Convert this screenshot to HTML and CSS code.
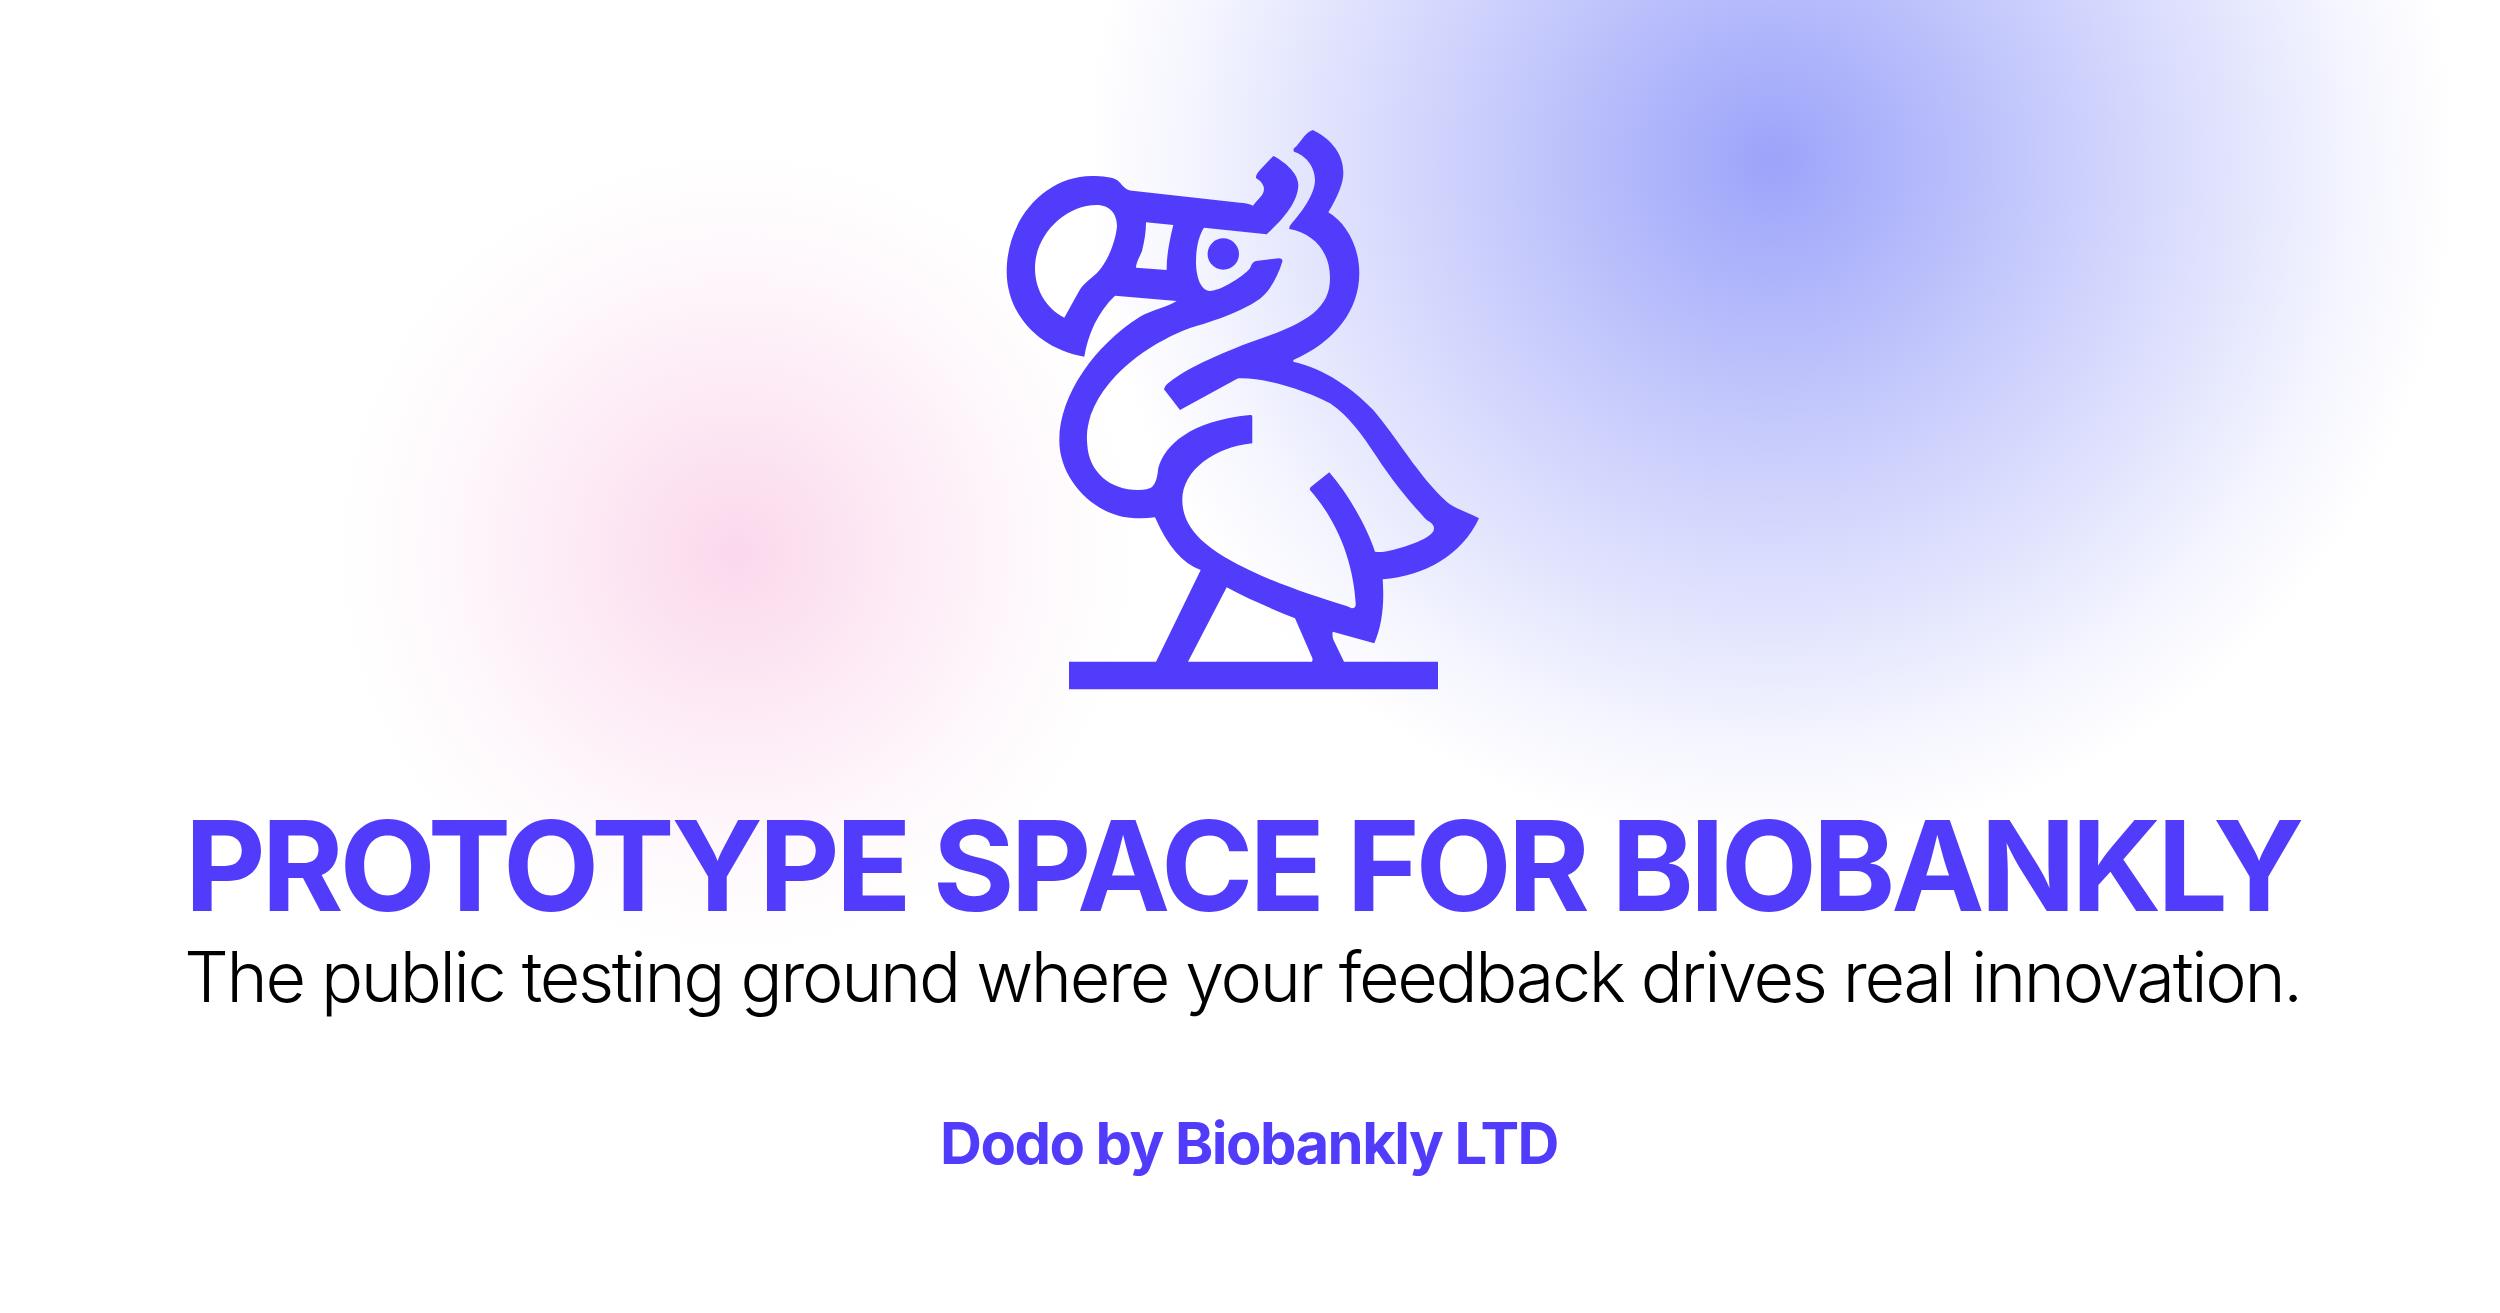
FILE: index.html
```html
<!DOCTYPE html>
<html lang="en">
<head>
<meta charset="utf-8">
<title>Dodo by Biobankly LTD</title>
<link rel="stylesheet" href="styles.css">
</head>
<body>
<main class="page">
  <svg class="logo" viewBox="1005 125 490 570" aria-hidden="true">
    <path class="logo-shape" fill-rule="evenodd" d="M1312.7 130 C1328 137 1343.3 152 1343.3 172 Q1344 186 1328.3 212.3 C1345 222 1359.3 245 1359.3 273.3 C1359.3 310 1335 342 1293.3 360 L1293.3 361.7 C1325 369 1352 388 1373.3 410 C1395 435 1420 478 1446.7 501.7 C1455 509 1468 512 1479 518.3 C1462 555 1425 576 1382.7 579.3 C1384.5 605 1382 625 1374.3 643.3 L1332.7 631.7 Q1332 637 1333.5 640 L1344 661.7 H1438 V689.3 H1069 V661.7 H1156 L1200.7 570 Q1174 561 1155 517.3 C1146 518.5 1138 518.5 1130 517.7 C1095 515 1059 480 1059.3 440 C1059.3 395 1095 345 1140 316.7 C1152 310 1168 307 1176.7 301 L1115 295.7 C1098 312 1088 334 1084.3 356.7 C1040 349 1006.7 315 1006.7 271.7 C1006.7 218 1046 176 1091.7 176 C1103 176 1112 177 1117 180 C1122 184 1124 189 1130 190.5 L1240 202.7 Q1248 203 1253 205.7 C1258 199 1264 195 1264 189 Q1264 183 1256 178 Q1255.5 175 1260 170 L1273.3 156 C1282 160 1298.3 172 1298.3 185 C1298.3 203 1280 222 1266.7 234.3 L1204 227.7 C1199 235 1196 248 1196 262 C1196 277 1201 291 1210 291 C1220 291 1243 277 1250 268.3 Q1252 262 1256 261 L1279 258.3 Q1283 258.5 1282.3 261.7 C1278 276 1270 290 1262 297 C1250 307 1225 318 1190 328 C1160 339 1108 368 1090.7 415 C1088 425 1086 432 1087.3 445 C1089 472 1110 490 1138.3 490 Q1148 490 1152 487 Q1157 483 1158.3 468 C1165 445 1190 421 1250 415 L1251 415 Q1252.3 415 1252.3 417 V443.3 C1215 447 1182.3 470 1182.3 500 C1182.3 528 1205 545 1226.7 558.3 C1260 578 1310 595 1343.3 605 Q1347 606 1351.7 608.3 Q1356 608.5 1355.7 603 C1354 575 1345 530 1310 490 Q1309 488 1312 486 L1329.3 472.3 C1350 496 1368 530 1375 551.7 Q1380 552.5 1384 551.7 C1400 549 1425 541 1432 533 Q1438 526 1426.7 520 C1417 510 1395 485 1376.7 456.7 C1362 435 1350 417 1330 403.3 C1310 393 1270 378 1240 378.3 Q1238 378 1236.7 379 L1180 410 L1164 389.3 Q1165 385 1170 381.7 C1185 370 1215 355 1256.7 340 C1280 332 1298 325 1313.3 313.3 C1325 303 1330 293 1330 278 C1330 250 1312 233 1289.3 229 Q1289 226 1292 223 C1300 214 1315 195 1315 180 C1315 166 1305 155 1294 151.7 Q1293 150 1294 148.3 C1300 144 1304 133 1312.7 130 Z
    M1096.7 205 C1110 205 1117 214 1117 226 C1116 240 1108 262 1096.7 273.3 C1088 281 1082 285 1078 293 L1064.3 317.7 C1046 308 1035 290 1035 268 C1035 235 1065 205 1096.7 205 Z
    M1146 222.3 L1173.3 225 C1169 243 1166.5 256 1166.7 270 L1136 267.7 C1136 263 1140 256 1142 251 C1144.5 241 1146 232 1146 222.3 Z
    M1226.7 587.3 L1188 661.7 H1312 Q1313 660 1312.3 658 L1295 618.3 C1270 608 1248 599 1226.7 587.3 Z
    M1239 254 A15.7 15.7 0 1 0 1207.6 254 A15.7 15.7 0 1 0 1239 254 Z"/>
  </svg>
  <div class="headline">
    <h1 class="title">PROTOTYPE SPACE FOR BIOBANKLY</h1>
    <p class="subtitle">The public testing ground where your feedback drives real innovation.</p>
  </div>
  <p class="byline">Dodo by Biobankly LTD</p>
</main>
</body>
</html>
```

FILE: styles.css
```css
html, body {
  margin: 0;
  height: 100%;
  overflow: hidden;
}

body {
  background:
    radial-gradient(circle 685px at 1772px 160px,
      rgba(68, 82, 245, 0.53) 0%,
      rgba(68, 82, 245, 0.47) 10%,
      rgba(68, 82, 245, 0.39) 25%,
      rgba(68, 82, 245, 0.3) 40%,
      rgba(68, 82, 245, 0.22) 55%,
      rgba(68, 82, 245, 0.14) 70%,
      rgba(68, 82, 245, 0.06) 85%,
      rgba(68, 82, 245, 0) 100%),
    radial-gradient(circle 400px at 736px 552px,
      rgba(240, 110, 185, 0.27) 0%,
      rgba(240, 110, 185, 0.22) 15%,
      rgba(240, 110, 185, 0.16) 35%,
      rgba(240, 110, 185, 0.1) 55%,
      rgba(240, 110, 185, 0.045) 75%,
      rgba(240, 110, 185, 0) 100%),
    #fff;
}

.page {
  height: 1313px;
  box-sizing: border-box;
  padding-top: 125px;
  display: flex;
  flex-direction: column;
  align-items: center;
  font-family: Inter, sans-serif;
}

.logo {
  width: 490px;
  height: 570px;
  flex: none;
}

.logo-shape {
  fill: #513cfb;
}

.headline {
  margin: 108px 15px 0 0;
  display: flex;
  flex-direction: column;
  align-items: center;
}

.title {
  margin: 0;
  font-size: 125px;
  line-height: 1;
  font-weight: 700;
  letter-spacing: -4.16px;
  color: #513cfb;
  white-space: nowrap;
}

.subtitle {
  margin: 3px 0 0;
  font-size: 70px;
  line-height: 1.3;
  font-weight: 300;
  letter-spacing: -2.32px;
  color: #000;
  white-space: nowrap;
}

.byline {
  margin: 87px 2px 0 0;
  font-size: 58px;
  line-height: 1.2;
  font-weight: 700;
  letter-spacing: -1.57px;
  color: #513cfb;
  white-space: nowrap;
}
```
